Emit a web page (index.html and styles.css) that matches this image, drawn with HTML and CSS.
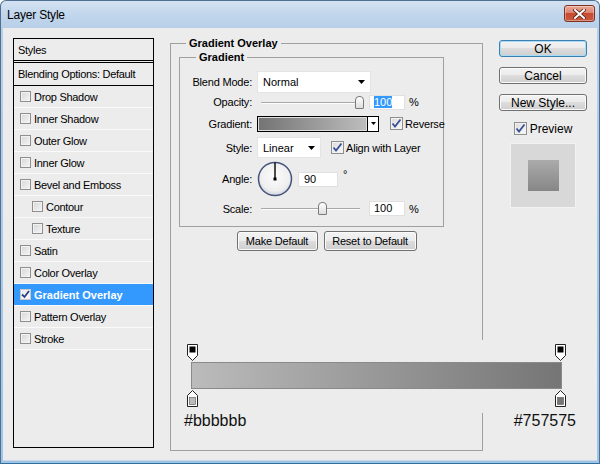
FILE: index.html
```html
<!DOCTYPE html>
<html>
<head>
<meta charset="utf-8">
<title>Layer Style</title>
<link rel="stylesheet" href="styles.css">
</head>
<body>
<div class="window">
  <div class="titlebar">
    <span class="title">Layer Style</span>
    <button class="close" aria-label="Close">
      <svg width="13" height="10" viewBox="0 0 13 10"><path d="M2 1L11 9M11 1L2 9" stroke="#5a2418" stroke-width="3.6" stroke-linecap="square"/><path d="M2 1L11 9M11 1L2 9" stroke="#fff" stroke-width="2" stroke-linecap="square"/></svg>
    </button>
  </div>
  <div class="client">
    <div class="styles-panel">
      <div class="sp-head">Styles</div>
      <div class="sp-row sp-blend">Blending Options: Default</div>
      <div class="sp-row"><span class="cb"></span>Drop Shadow</div>
      <div class="sp-row"><span class="cb"></span>Inner Shadow</div>
      <div class="sp-row"><span class="cb"></span>Outer Glow</div>
      <div class="sp-row"><span class="cb"></span>Inner Glow</div>
      <div class="sp-row"><span class="cb"></span>Bevel and Emboss</div>
      <div class="sp-row sp-sub"><span class="cb"></span>Contour</div>
      <div class="sp-row sp-sub"><span class="cb"></span>Texture</div>
      <div class="sp-row"><span class="cb"></span>Satin</div>
      <div class="sp-row"><span class="cb"></span>Color Overlay</div>
      <div class="sp-row sp-sel"><span class="cb cb-on"><svg width="9" height="9" viewBox="0 0 9 9"><path d="M1 4.5L3.5 7L8 1" fill="none" stroke="#2b3f86" stroke-width="1.8"/></svg></span>Gradient Overlay</div>
      <div class="sp-row"><span class="cb"></span>Pattern Overlay</div>
      <div class="sp-row"><span class="cb"></span>Stroke</div>
    </div>

    <fieldset class="group outer">
      <legend>Gradient Overlay</legend>
      <fieldset class="group inner">
        <legend>Gradient</legend>
        <div class="row r1">
          <label>Blend Mode:</label>
          <div class="select sel-blend"><span>Normal</span><svg class="arrow" width="7" height="4" viewBox="0 0 7 4"><path d="M0 0H7L3.5 4Z"/></svg></div>
        </div>
        <div class="row r2">
          <label>Opacity:</label>
          <div class="slider"><div class="track"></div><div class="thumb" style="left:98px"></div></div>
          <span class="field"><span class="hl">100</span></span>
          <span class="unit">%</span>
        </div>
        <div class="row r3">
          <label>Gradient:</label>
          <div class="swatch"><div class="swatch-fill"></div><div class="swatch-arrow"><svg width="5" height="3" viewBox="0 0 5 3"><path d="M0 0H5L2.5 3Z"/></svg></div></div>
          <span class="cb cb-big cb-on cb-gap"><svg width="11" height="11" viewBox="0 0 11 11"><path d="M1.5 5.5L4 8.5L9.5 1.5" fill="none" stroke="#3a4f98" stroke-width="1.8"/></svg></span>
          <span class="cb-text">Reverse</span>
        </div>
        <div class="row r4">
          <label>Style:</label>
          <div class="select sel-style"><span>Linear</span><svg class="arrow" width="7" height="4" viewBox="0 0 7 4"><path d="M0 0H7L3.5 4Z"/></svg></div>
          <span class="cb cb-big cb-on cb-gap2"><svg width="11" height="11" viewBox="0 0 11 11"><path d="M1.5 5.5L4 8.5L9.5 1.5" fill="none" stroke="#3a4f98" stroke-width="1.8"/></svg></span>
          <span class="cb-text">Align with Layer</span>
        </div>
        <div class="row r5">
          <label>Angle:</label>
          <svg class="dial" width="36" height="36" viewBox="0 0 36 36">
            <defs><radialGradient id="dg" cx="50%" cy="42%" r="58%"><stop offset="0" stop-color="#fbfbfb"/><stop offset="0.75" stop-color="#efefef"/><stop offset="1" stop-color="#cfd3dc"/></radialGradient></defs>
            <circle cx="18" cy="18" r="16.5" fill="url(#dg)" stroke="#45557c" stroke-width="1.5"/>
            <line x1="18" y1="18" x2="18" y2="1.5" stroke="#000" stroke-width="1.4"/>
            <rect x="16.5" y="16.5" width="3" height="3" fill="#000"/>
          </svg>
          <span class="field field-angle">90</span>
          <span class="deg">°</span>
        </div>
        <div class="row r6">
          <label>Scale:</label>
          <div class="slider"><div class="track"></div><div class="thumb" style="left:61px"></div></div>
          <span class="field">100</span>
          <span class="unit">%</span>
        </div>
      </fieldset>
      <div class="btnrow">
        <button class="btn btn-make">Make Default</button>
        <button class="btn btn-reset">Reset to Default</button>
      </div>
    </fieldset>

    <div class="side">
      <button class="btn btn-side btn-default">OK</button>
      <button class="btn btn-side">Cancel</button>
      <button class="btn btn-side">New Style...</button>
      <div class="preview-check">
        <span class="cb cb-big cb-on"><svg width="11" height="11" viewBox="0 0 11 11"><path d="M1.5 5.5L4 8.5L9.5 1.5" fill="none" stroke="#3a4f98" stroke-width="1.8"/></svg></span>
        <span>Preview</span>
      </div>
      <div class="preview-box"><div class="preview-swatch"></div></div>
    </div>
  </div>

  <div class="grad-editor">
    <div class="ge-stops">
      <svg width="11" height="17" viewBox="0 0 11 17"><path d="M0.5 0.5H10.5V11.5L5.5 16.5L0.5 11.5Z" fill="#fff" stroke="#222"/><rect x="2.5" y="2.5" width="6" height="6" fill="#000"/></svg>
      <svg width="11" height="17" viewBox="0 0 11 17"><path d="M0.5 0.5H10.5V11.5L5.5 16.5L0.5 11.5Z" fill="#fff" stroke="#222"/><rect x="2.5" y="2.5" width="6" height="6" fill="#000"/></svg>
    </div>
    <div class="ge-bar"></div>
    <div class="ge-stops ge-stops-bottom">
      <svg width="11" height="17" viewBox="0 0 11 17"><path d="M5.5 0.5L10.5 5.5V16.5H0.5V5.5Z" fill="#fff" stroke="#222"/><rect x="2.5" y="7.5" width="6" height="7" fill="#bbbbbb" stroke="#555" stroke-width="0.6"/></svg>
      <svg width="11" height="17" viewBox="0 0 11 17"><path d="M5.5 0.5L10.5 5.5V16.5H0.5V5.5Z" fill="#fff" stroke="#222"/><rect x="2.5" y="7.5" width="6" height="7" fill="#757575" stroke="#555" stroke-width="0.6"/></svg>
    </div>
  </div>
  <div class="grad-labels"><span>#bbbbbb</span><span>#757575</span></div>
</div>
</body>
</html>
```

FILE: styles.css
```css
html, body {
  margin: 0;
  padding: 0;
}
body {
  width: 600px;
  height: 464px;
  overflow: hidden;
  font-family: "Liberation Sans", Arial, sans-serif;
  font-size: 11px;
  color: #000;
  background: #fff;
}
.window {
  position: relative;
  width: 600px;
  height: 464px;
  box-sizing: border-box;
  border: 1px solid #4f6f93;
  border-bottom-color: #2f6f9f;
  border-radius: 6px 6px 0 0;
  background: linear-gradient(#d3e2f2 0, #c1d6ec 14px, #b8cfe8 27px, #9fc4e6 100%);
  display: flex;
  flex-direction: column;
}
.titlebar {
  height: 27px;
  flex: none;
  display: flex;
  align-items: flex-start;
  padding: 0 4px 0 6px;
}
.title {
  font-size: 12px;
  letter-spacing: -0.2px;
  line-height: 14px;
  margin-top: 7px;
  color: #000;
}
.close {
  margin-left: auto;
  margin-top: 4px;
  width: 31px;
  height: 17px;
  padding: 0;
  box-sizing: border-box;
  border: 1px solid #7e3324;
  border-radius: 3px;
  background: linear-gradient(#eaa897 0%, #dc8470 45%, #c74a31 50%, #c95a3f 100%);
  box-shadow: inset 0 0 0 1px rgba(255,255,255,0.35);
  display: flex;
  align-items: center;
  justify-content: center;
}
.client {
  flex: 1;
  margin: 0 2px 2px;
  background: #ececec;
  display: flex;
  align-items: flex-start;
  padding-left: 10px;
  border-bottom: 1px solid #c8d8e8;
}

/* styles list */
.styles-panel {
  margin-top: 10px;
  width: 141px;
  height: 410px;
  box-sizing: border-box;
  border: 1px solid #000;
  flex: none;
  letter-spacing: -0.3px;
}
.sp-head {
  height: 21px;
  border-bottom: 3px double #000;
  display: flex;
  align-items: center;
  padding-left: 4px;
}
.sp-row {
  height: 21px;
  border-bottom: 1px solid #fafafa;
  display: flex;
  align-items: center;
  padding-left: 6px;
}
.sp-blend {
  height: 22px;
  border-bottom: 1px solid #000;
  padding-left: 4px;
}
.sp-sub {
  padding-left: 18px;
}
.sp-sel {
  background: #3399ff;
  color: #fff;
  font-weight: bold;
  letter-spacing: 0;
}
.sp-row .cb {
  margin-right: 3px;
}

/* checkbox */
.cb {
  display: inline-flex;
  align-items: center;
  justify-content: center;
  width: 11px;
  height: 11px;
  box-sizing: border-box;
  border: 1px solid #8f8f8f;
  background: linear-gradient(135deg, #d6d6d6, #f6f6f6);
  box-shadow: inset 0 0 0 1px #f2f2f2;
  flex: none;
}
.cb-on {
  background: #fff;
}
.sp-sel .cb-on {
  background: linear-gradient(135deg, #e6e6e6, #fff);
  border-color: #c8c8c8;
}
.cb-big {
  width: 13px;
  height: 13px;
  background: linear-gradient(135deg, #dadada, #fafafa);
}
.cb-gap {
  margin-left: 11px;
}
.cb-gap2 {
  margin-left: 10px;
}
.cb-text {
  margin-left: 2px;
  letter-spacing: -0.2px;
}

/* group boxes */
.group {
  margin: 0;
  padding: 0;
  box-sizing: border-box;
  border: 1px solid #a0a0a0;
  min-width: 0;
}
.group > legend {
  padding: 0 3px;
  font-weight: bold;
  line-height: 14px;
  font-size: 11px;
}
.outer {
  margin: 8px 0 0 16px;
  width: 313px;
  height: 415px;
  flex: none;
  padding: 0 0 0 8px;
}
.outer > legend {
  margin-left: 7px;
}
.inner {
  width: 265px;
  padding: 7px 0 10px 0;
}
.inner > legend {
  margin-left: 16px;
}
.row {
  display: flex;
  align-items: center;
}
.row label {
  width: 72px;
  margin-right: 5px;
  text-align: right;
  flex: none;
  letter-spacing: -0.2px;
}
.r1 { height: 21px; }
.r2 { height: 16px; margin-top: 2px; }
.r3 { height: 17px; margin-top: 5px; }
.r4 { height: 21px; margin-top: 5px; }
.r5 { height: 36px; margin-top: 3px; }
.r6 { height: 15px; margin-top: 4px; }

.select {
  height: 100%;
  box-sizing: border-box;
  background: #fff;
  border: 1px solid #e4e4e4;
  display: flex;
  align-items: center;
  padding: 1px 5px 0 5px;
}
.select .arrow {
  margin-left: auto;
}
.sel-blend {
  width: 114px;
  height: 22px;
}
.sel-style {
  width: 64px;
  height: 21px;
}

.slider {
  position: relative;
  width: 107px;
  height: 15px;
  flex: none;
}
.track {
  position: absolute;
  left: 4px;
  right: 4px;
  top: 7px;
  height: 0;
  border-top: 1px solid #a8a8a8;
  border-bottom: 1px solid #fdfdfd;
}
.thumb {
  position: absolute;
  top: 1px;
  width: 9px;
  height: 13px;
  box-sizing: border-box;
  border: 1px solid #7a7a7a;
  border-radius: 4px 4px 1px 1px;
  background: linear-gradient(#ffffff, #dedede);
}
.field {
  margin-left: 5px;
  width: 36px;
  height: 15px;
  box-sizing: border-box;
  background: #fff;
  border: 1px solid #e0e0e0;
  padding-left: 4px;
  line-height: 13px;
  flex: none;
}
.field .hl {
  background: #3399ff;
  color: #fff;
  display: inline-block;
  line-height: 12px;
}
.unit {
  margin-left: 4px;
}
.field-angle {
  width: 40px;
  padding-left: 5px;
}
.deg {
  align-self: flex-start;
  margin-top: 7px;
  margin-left: 5px;
  font-size: 11px;
}
.dial {
  display: block;
  flex: none;
}

.swatch {
  width: 122px;
  height: 16px;
  box-sizing: border-box;
  border: 1px solid #000;
  display: flex;
  flex: none;
}
.swatch-fill {
  flex: 1;
  background: linear-gradient(to right, #747474, #bdbdbd);
  border: 1px solid #ddd;
}
.swatch-arrow {
  width: 10px;
  border-left: 1px solid #000;
  background: #fff;
  display: flex;
  align-items: center;
  justify-content: center;
}

/* buttons */
.btn {
  font-family: "Liberation Sans", Arial, sans-serif;
  color: #000;
  padding: 0;
  box-sizing: border-box;
  border: 1px solid #707070;
  border-radius: 3px;
  background: linear-gradient(#f3f3f3 0%, #ebebeb 49%, #dddddd 50%, #cfcfcf 100%);
  box-shadow: inset 0 0 0 1px #fbfbfb;
}
.btnrow {
  display: flex;
  justify-content: center;
  gap: 6px;
  margin: 4px 8px 0 0;
}
.btn-make, .btn-reset {
  height: 20px;
  font-size: 11px;
  letter-spacing: -0.2px;
}
.btn-make { width: 81px; }
.btn-reset { width: 93px; }

.side {
  margin: 12px 0 0 16px;
  width: 88px;
  flex: none;
  display: flex;
  flex-direction: column;
  align-items: center;
}
.btn-side {
  width: 88px;
  height: 17px;
  font-size: 12px;
  line-height: 14px;
  margin-bottom: 10px;
}
.btn-default {
  border-color: #3c7fb1;
  box-shadow: inset 0 0 0 1px #a6dcf5;
}
.preview-check {
  display: flex;
  align-items: center;
  gap: 3px;
  font-size: 12px;
  height: 13px;
  margin-top: 1px;
}
.preview-box {
  margin-top: 8px;
  width: 66px;
  height: 65px;
  box-sizing: border-box;
  background: #d8d8d8;
  border: 1px solid #f2f2f2;
  display: flex;
  align-items: center;
  justify-content: center;
}
.preview-swatch {
  width: 31px;
  height: 31px;
  background: linear-gradient(#ababab, #868686);
}

/* gradient editor overlay */
.grad-editor {
  position: absolute;
  left: 175px;
  top: 339px;
  width: 413px;
  height: 73px;
  box-sizing: border-box;
  background: #ececec;
  padding: 4px 0 0 11px;
}
.ge-stops {
  width: 379px;
  height: 17px;
  display: flex;
  justify-content: space-between;
}
.ge-stops svg {
  display: block;
}
.ge-stops-bottom {
  margin-top: 1px;
}
.ge-bar {
  margin: 1px 0 0 4px;
  width: 371px;
  height: 27px;
  box-sizing: border-box;
  border: 1px solid #8a8a8a;
  background: linear-gradient(to right, #bbbbbb, #757575);
}
.grad-labels {
  position: absolute;
  left: 183px;
  top: 410px;
  width: 392px;
  display: flex;
  justify-content: space-between;
  font-size: 16px;
  line-height: 20px;
  color: #111;
}
```
